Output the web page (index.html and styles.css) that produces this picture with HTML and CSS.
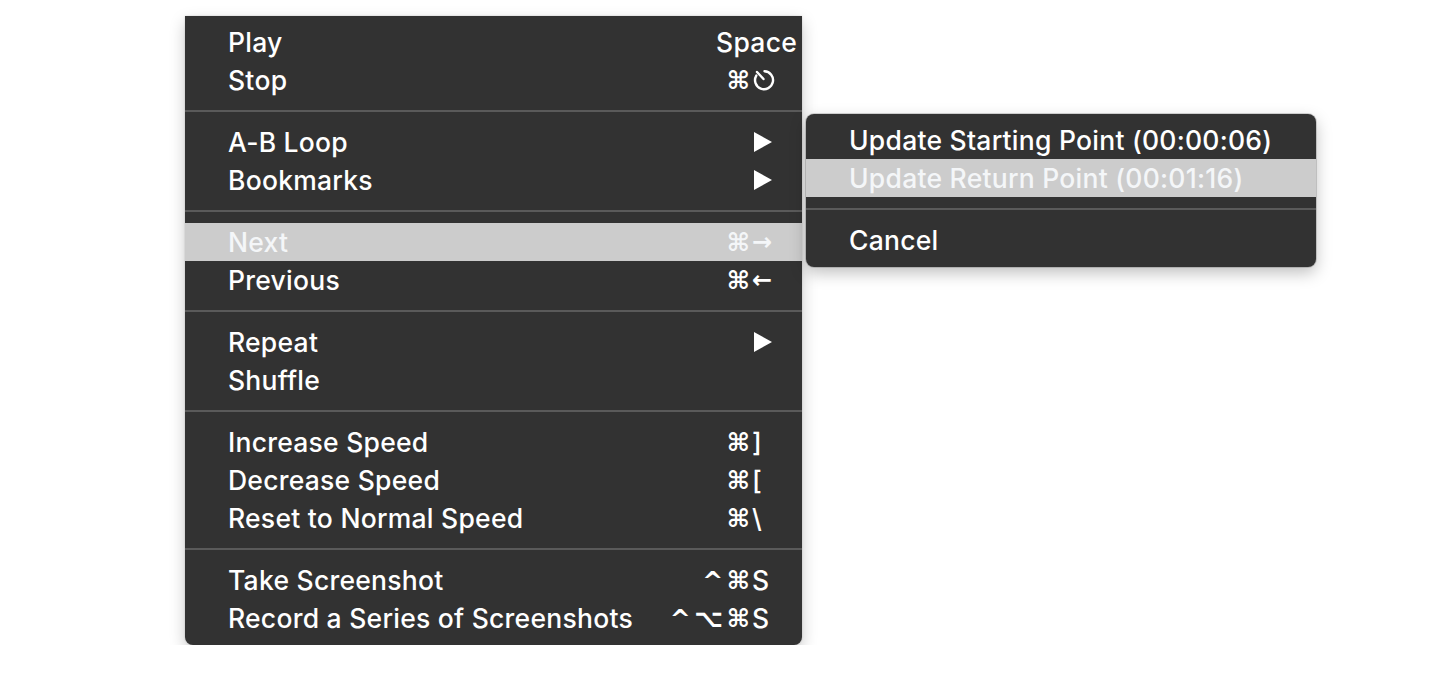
FILE: index.html
```html
<!DOCTYPE html>
<html>
<head>
<meta charset="utf-8">
<link rel="stylesheet" href="styles.css">
</head>
<body>
<div class="desk">
  <div class="menu main">
    <div class="row"><span class="label">Play</span><span class="sc"><span class="mods"></span><span class="key wide">Space</span></span></div>
    <div class="row"><span class="label">Stop</span><span class="sc"><span class="mods">⌘</span><span class="key"><svg class="ico" viewBox="0 0 24 24" width="24" height="24"><path d="M12.5 3.2 A9 9 0 1 1 4.3 7.6" fill="none" stroke="#fff" stroke-width="2.4" stroke-linecap="round"/><path d="M5 4 L11.5 11" fill="none" stroke="#fff" stroke-width="2.4" stroke-linecap="round"/></svg></span></span></div>
    <div class="sep"></div>
    <div class="row"><span class="label">A-B Loop</span><span class="sc"><span class="mods"></span><span class="key"><svg class="tri" viewBox="0 0 18 20" width="18" height="20"><polygon points="0,0 18,10 0,20" fill="#fff"/></svg></span></span></div>
    <div class="row"><span class="label">Bookmarks</span><span class="sc"><span class="mods"></span><span class="key"><svg class="tri" viewBox="0 0 18 20" width="18" height="20"><polygon points="0,0 18,10 0,20" fill="#fff"/></svg></span></span></div>
    <div class="sep"></div>
    <div class="row hl"><span class="label">Next</span><span class="sc"><span class="mods">⌘</span><span class="key arrow">→</span></span></div>
    <div class="row"><span class="label">Previous</span><span class="sc"><span class="mods">⌘</span><span class="key arrow">←</span></span></div>
    <div class="sep"></div>
    <div class="row"><span class="label">Repeat</span><span class="sc"><span class="mods"></span><span class="key"><svg class="tri" viewBox="0 0 18 20" width="18" height="20"><polygon points="0,0 18,10 0,20" fill="#fff"/></svg></span></span></div>
    <div class="row"><span class="label">Shuffle</span></div>
    <div class="sep"></div>
    <div class="row"><span class="label">Increase Speed</span><span class="sc"><span class="mods">⌘</span><span class="key">]</span></span></div>
    <div class="row"><span class="label">Decrease Speed</span><span class="sc"><span class="mods">⌘</span><span class="key">[</span></span></div>
    <div class="row"><span class="label">Reset to Normal Speed</span><span class="sc"><span class="mods">⌘</span><span class="key">\</span></span></div>
    <div class="sep"></div>
    <div class="row"><span class="label">Take Screenshot</span><span class="sc"><span class="mods">^ ⌘</span><span class="key">S</span></span></div>
    <div class="row"><span class="label">Record a Series of Screenshots</span><span class="sc"><span class="mods">^ ⌥ ⌘</span><span class="key">S</span></span></div>
  </div>
  <div class="menu sub">
    <div class="row"><span class="label">Update Starting Point (00:00:06)</span></div>
    <div class="row hl"><span class="label">Update Return Point (00:01:16)</span></div>
    <div class="sep"></div>
    <div class="row"><span class="label">Cancel</span></div>
  </div>
</div>
</body>
</html>
```

FILE: styles.css
```css
html, body {
  margin: 0;
  padding: 0;
  background: #ffffff;
}
.desk {
  display: flex;
  align-items: flex-start;
  padding: 16px 0 0 185px;
  font-family: Inter, "DejaVu Sans", sans-serif;
  font-size: 26.5px;
  font-weight: 500;
  letter-spacing: 0.25px;
  color: #ffffff;
}
.menu {
  background: #323232;
  box-sizing: border-box;
}
.main {
  width: 617px;
  padding: 7px 0 8px;
  border-radius: 0 0 8px 8px;
  box-shadow: 0 6px 16px rgba(0,0,0,0.22), 0 0 2px rgba(0,0,0,0.2);
}
.sub {
  width: 510px;
  margin: 98px 0 0 4px;
  padding: 7px 0 8px;
  border-radius: 8px;
  box-shadow: 0 6px 16px rgba(0,0,0,0.25), 0 0 0 1px rgba(0,0,0,0.15);
}
.row {
  display: flex;
  align-items: center;
  height: 38px;
  padding: 0 22px 0 43px;
  white-space: nowrap;
}
.label {
  flex: 1;
}
.sc {
  display: flex;
  align-items: center;
}
.mods {
  font-family: "DejaVu Sans", sans-serif;
  font-size: 25px;
  font-weight: bold;
  text-align: right;
  word-spacing: -5px;
  letter-spacing: 0;
}
.key {
  width: 28px;
  padding-left: 2px;
  display: flex;
  align-items: center;
}
.key.arrow {
  font-family: "DejaVu Sans", sans-serif;
  font-weight: bold;
  font-size: 24px;
  letter-spacing: 0;
}
.key.wide {
  width: auto;
  margin-right: -17px;
  margin-left: -43px;
}
.tri {
  margin-left: 2px;
  display: block;
}
.ico {
  display: block;
}
.hl {
  background: #cccccc;
  color: #f4f6f8;
}
.sep {
  height: 2px;
  margin: 11px 0;
  background: #5a5a5a;
}
```
